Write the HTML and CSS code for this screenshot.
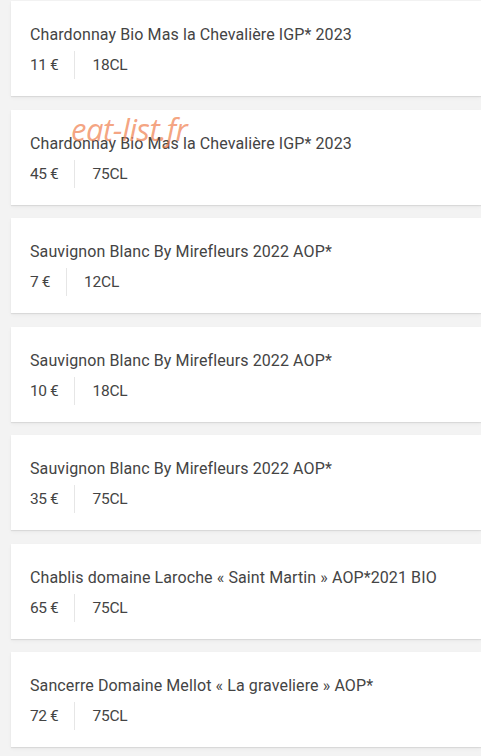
FILE: index.html
```html
<!DOCTYPE html>
<html lang="fr">
<head>
<meta charset="utf-8">
<title>Vins blancs</title>
<link rel="stylesheet" href="styles.css">
</head>
<body>
<div class="list">
  <div class="card">
    <div class="name">Chardonnay Bio Mas la Chevalière IGP* 2023</div>
    <div class="meta"><span class="price">11 €</span><span class="vol">18CL</span></div>
  </div>
  <div class="card">
    <div class="name">Chardonnay Bio Mas la Chevalière IGP* 2023</div>
    <div class="meta"><span class="price">45 €</span><span class="vol">75CL</span></div>
  </div>
  <div class="card">
    <div class="name">Sauvignon Blanc By Mirefleurs 2022 AOP*</div>
    <div class="meta"><span class="price">7 €</span><span class="vol">12CL</span></div>
  </div>
  <div class="card">
    <div class="name">Sauvignon Blanc By Mirefleurs 2022 AOP*</div>
    <div class="meta"><span class="price">10 €</span><span class="vol">18CL</span></div>
  </div>
  <div class="card">
    <div class="name">Sauvignon Blanc By Mirefleurs 2022 AOP*</div>
    <div class="meta"><span class="price">35 €</span><span class="vol">75CL</span></div>
  </div>
  <div class="card">
    <div class="name">Chablis domaine Laroche « Saint Martin » AOP*2021 BIO</div>
    <div class="meta"><span class="price">65 €</span><span class="vol">75CL</span></div>
  </div>
  <div class="card">
    <div class="name">Sancerre Domaine Mellot « La graveliere » AOP*</div>
    <div class="meta"><span class="price">72 €</span><span class="vol">75CL</span></div>
  </div>
</div>
<div class="watermark">eat-list.fr</div>
</body>
</html>
```
FILE: styles.css
```css
html, body {
  margin: 0;
  padding: 0;
}
body {
  background: #f3f3f3;
  font-family: Roboto, "Liberation Sans", sans-serif;
  color: #444;
  width: 481px;
  height: 756px;
  overflow: hidden;
  position: relative;
}
.list {
  display: flex;
  flex-direction: column;
  gap: 13.5px;
  padding: 1px 0 0 11px;
}
.card {
  background: #fff;
  height: 95px;
  box-sizing: border-box;
  padding: 24px 0 0 19px;
  box-shadow: 0 1px 1px rgba(0,0,0,0.08), 0 2px 4px rgba(0,0,0,0.04);
}
.name {
  font-size: 16px;
  line-height: 20px;
  letter-spacing: 0.1px;
}
.meta {
  display: flex;
  align-items: center;
  margin-top: 6px;
  font-size: 15.5px;
  line-height: 28px;
}
.price {
  padding-right: 16px;
  border-right: 1px solid #e6e6e6;
  letter-spacing: -0.4px;
}
.vol {
  padding-left: 17px;
  letter-spacing: -0.2px;
}
.watermark {
  position: absolute;
  left: 71px;
  top: 108px;
  font-family: "Open Sans", sans-serif;
  font-style: italic;
  font-size: 31px;
  color: rgba(240, 125, 75, 0.7);
  letter-spacing: -0.5px;
}
```
